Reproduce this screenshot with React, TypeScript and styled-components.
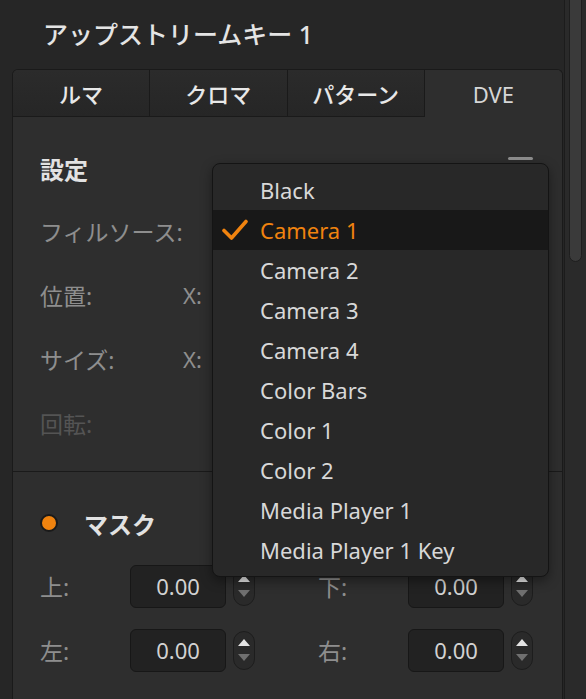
import React from 'react';
import styled, { createGlobalStyle } from 'styled-components';

const SOURCES = [
  'Black',
  'Camera 1',
  'Camera 2',
  'Camera 3',
  'Camera 4',
  'Color Bars',
  'Color 1',
  'Color 2',
  'Media Player 1',
  'Media Player 1 Key',
];

const TABS = ['ルマ', 'クロマ', 'パターン', 'DVE'];

const ORANGE = '#f0830f';

const GlobalStyle = createGlobalStyle`
  html, body {
    margin: 0;
    padding: 0;
    background: #262626;
  }
  body {
    font-family: "Noto Sans", "Noto Sans CJK JP", sans-serif;
  }
`;

export default function App() {
  const selected = 'Camera 1';

  return (
    <Page>
      <GlobalStyle />
      <Main>
        <Title>アップストリームキー 1</Title>
        <Panel>
          <TabRow>
            {TABS.map((tab, i) => (
              <Tab key={tab} active={i === TABS.length - 1}>
                {tab}
              </Tab>
            ))}
          </TabRow>

          <Section>
            <SectionHeader>
              <Heading>設定</Heading>
              <CollapseBar />
            </SectionHeader>
            <Row>
              <Label>フィルソース:</Label>
            </Row>
            <Row>
              <Label>位置:</Label>
              <AxisLabel>X:</AxisLabel>
            </Row>
            <Row>
              <Label>サイズ:</Label>
              <AxisLabel>X:</AxisLabel>
            </Row>
            <Row>
              <Label disabled>回転:</Label>
            </Row>
          </Section>

          <Section bordered>
            <SectionHeader>
              <HeadingGroup>
                <Dot />
                <Heading>マスク</Heading>
              </HeadingGroup>
            </SectionHeader>
            <MaskRow>
              <Field label="上:" />
              <Field label="下:" />
            </MaskRow>
            <MaskRow>
              <Field label="左:" />
              <Field label="右:" />
            </MaskRow>
          </Section>
        </Panel>
      </Main>

      <ScrollTrack>
        <ScrollThumb />
      </ScrollTrack>

      <Menu>
        {SOURCES.map((name) => {
          const isSelected = name === selected;
          return (
            <MenuItem key={name} selected={isSelected}>
              {isSelected && (
                <Check viewBox="0 0 26 22" width="26" height="22">
                  <path
                    d="M2 11.5 L9.5 19 L24 2.5"
                    fill="none"
                    stroke={ORANGE}
                    strokeWidth="3.6"
                    strokeLinecap="round"
                    strokeLinejoin="round"
                  />
                </Check>
              )}
              {name}
            </MenuItem>
          );
        })}
      </Menu>
    </Page>
  );
}

function Field({ label }: { label: string }) {
  return (
    <FieldGroup>
      <FieldLabel>{label}</FieldLabel>
      <NumberBox>0.00</NumberBox>
      <Spinner>
        <Arrow up />
        <Arrow />
      </Spinner>
    </FieldGroup>
  );
}

const Page = styled.div`
  position: relative;
  display: flex;
  width: 586px;
  height: 699px;
  overflow: hidden;
  background: #262626;
`;

const Main = styled.div`
  flex: 1;
  display: flex;
  flex-direction: column;
  padding-left: 12px;
  padding-right: 1px;
`;

const Title = styled.div`
  height: 69px;
  display: flex;
  align-items: center;
  padding-left: 31px;
  padding-bottom: 4px;
  box-sizing: border-box;
  font-size: 25px;
  font-weight: 500;
  color: #e4e4e4;
`;

const Panel = styled.div`
  flex: 1;
  display: flex;
  flex-direction: column;
  background: #2e2e2e;
  border: 1px solid #1a1a1a;
  border-bottom: none;
  border-radius: 6px 6px 0 0;
  overflow: hidden;
`;

const TabRow = styled.div`
  display: grid;
  grid-template-columns: repeat(4, 1fr);
  height: 47px;
`;

const Tab = styled.div<{ active?: boolean }>`
  display: flex;
  align-items: center;
  justify-content: center;
  font-size: 22px;
  font-weight: ${({ active }) => (active ? 400 : 500)};
  color: ${({ active }) => (active ? '#d6d6d6' : '#e8e8e8')};
  background: ${({ active }) =>
    active ? '#2e2e2e' : 'linear-gradient(#2b2b2b, #262626)'};
  border-right: ${({ active }) => (active ? 'none' : '1px solid #1a1a1a')};
  border-bottom: ${({ active }) => (active ? 'none' : '1px solid #1a1a1a')};
`;

const Section = styled.div<{ bordered?: boolean }>`
  display: flex;
  flex-direction: column;
  padding: 20px 29px 16px 27px;
  border-top: ${({ bordered }) => (bordered ? '1px solid #1a1a1a' : 'none')};
`;

const SectionHeader = styled.div`
  height: 62px;
  display: flex;
  align-items: center;
  justify-content: space-between;
`;

const HeadingGroup = styled.div`
  display: flex;
  align-items: center;
  gap: 26px;
`;

const Heading = styled.div`
  font-size: 24px;
  font-weight: 700;
  color: #e2e2e2;
`;

const CollapseBar = styled.div`
  align-self: flex-start;
  margin-top: 20px;
  width: 25px;
  height: 3px;
  border-radius: 2px;
  background: #8e8e8e;
`;

const Dot = styled.div`
  width: 14px;
  height: 14px;
  border-radius: 50%;
  background: ${ORANGE};
  border: 2px solid #1a1a1a;
`;

const Row = styled.div`
  height: 64px;
  display: flex;
  align-items: center;
`;

const Label = styled.div<{ disabled?: boolean }>`
  width: 143px;
  font-size: 23px;
  color: ${({ disabled }) => (disabled ? '#545454' : '#8e8e8e')};
`;

const AxisLabel = styled.div`
  font-size: 22px;
  color: #8e8e8e;
`;

const MaskRow = styled.div`
  height: 64px;
  display: flex;
  align-items: center;
  gap: 63px;
`;

const FieldGroup = styled.div`
  display: flex;
  align-items: center;
`;

const FieldLabel = styled.div`
  width: 90px;
  font-size: 23px;
  color: #8e8e8e;
`;

const NumberBox = styled.div`
  width: 96px;
  height: 43px;
  box-sizing: border-box;
  display: flex;
  align-items: center;
  justify-content: center;
  margin-right: 7px;
  border: 1px solid #171717;
  border-radius: 6px;
  background: #222222;
  font-size: 22px;
  color: #d2d2d2;
`;

const Spinner = styled.div`
  width: 22px;
  height: 39px;
  box-sizing: border-box;
  display: flex;
  flex-direction: column;
  align-items: center;
  justify-content: center;
  gap: 8px;
  border: 1px solid #1d1d1d;
  border-radius: 11px;
  background: #2a2a2a;
`;

const Arrow = styled.div<{ up?: boolean }>`
  width: 0;
  height: 0;
  border-left: 6px solid transparent;
  border-right: 6px solid transparent;
  ${({ up }) =>
    up ? 'border-bottom: 7px solid #e4e4e4;' : 'border-top: 7px solid #707070;'}
`;

const ScrollTrack = styled.div`
  width: 22px;
  border-left: 1px solid #1c1c1c;
  background: #2a2a2a;
  display: flex;
  justify-content: center;
`;

const ScrollThumb = styled.div`
  width: 11px;
  height: 270px;
  margin-top: -10px;
  border: 1px solid #1e1e1e;
  border-radius: 7px;
  background: #3a3a3a;
`;

const Menu = styled.div`
  position: absolute;
  left: 212px;
  top: 163px;
  width: 337px;
  box-sizing: border-box;
  padding: 6px 0 6px;
  display: flex;
  flex-direction: column;
  background: #282828;
  border: 1px solid #141414;
  border-radius: 8px;
  box-shadow: 0 4px 12px rgba(0, 0, 0, 0.4);
`;

const MenuItem = styled.div<{ selected?: boolean }>`
  position: relative;
  height: 40px;
  display: flex;
  align-items: center;
  padding-left: 47px;
  font-size: 22px;
  color: ${({ selected }) => (selected ? ORANGE : '#d8d8d8')};
  background: ${({ selected }) => (selected ? '#181818' : 'transparent')};
`;

const Check = styled.svg`
  position: absolute;
  left: 9px;
  top: 9px;
`;
